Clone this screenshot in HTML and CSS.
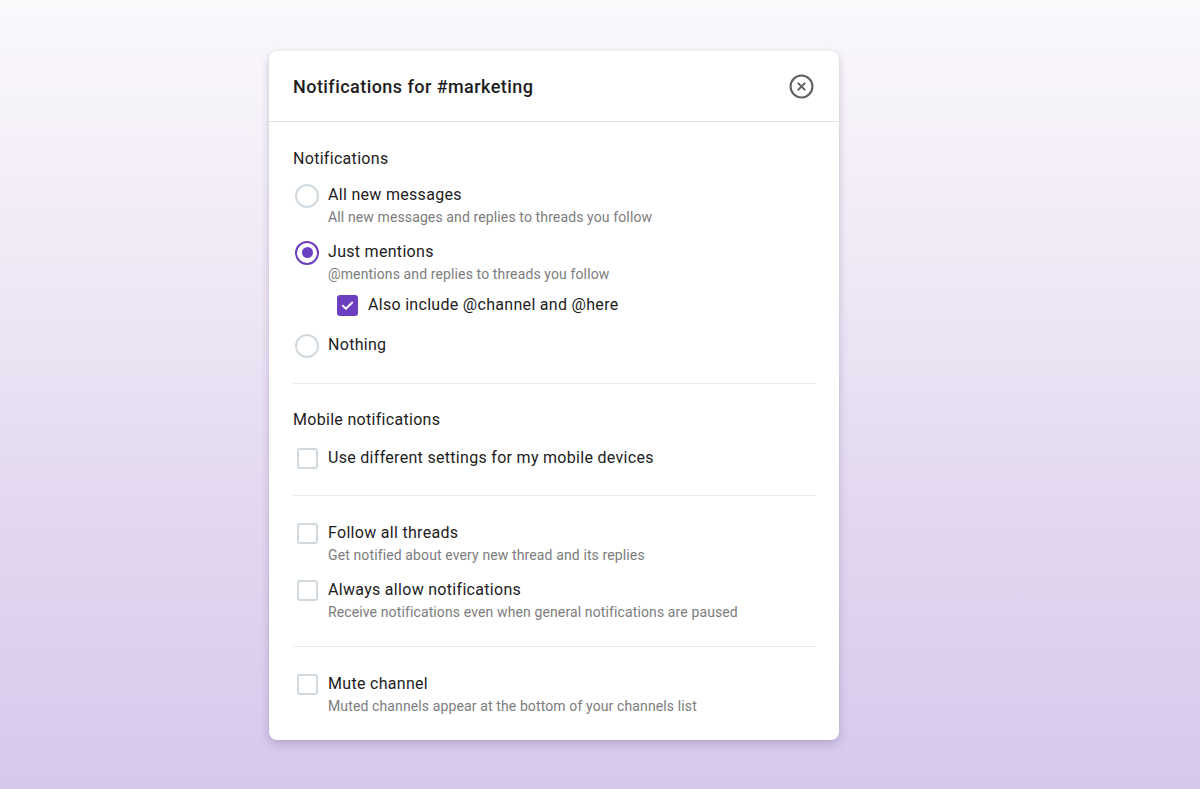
FILE: index.html
```html
<!DOCTYPE html>
<html lang="en">
<head>
<meta charset="utf-8">
<title>Notifications for #marketing</title>
<link rel="stylesheet" href="styles.css">
</head>
<body>
<div class="page">
  <div class="dialog">
    <div class="dialog-header">
      <h1 class="dialog-title">Notifications for #marketing</h1>
      <button class="close-btn" aria-label="Close">
        <svg width="25" height="25" viewBox="0 0 24 24" fill="none" stroke="#616061" stroke-width="2" stroke-linecap="round">
          <circle cx="12" cy="12" r="10.5"/>
          <path d="M9 9l6 6M15 9l-6 6"/>
        </svg>
      </button>
    </div>

    <div class="section section-first">
      <div class="section-label">Notifications</div>
      <div class="options">
        <div class="option">
          <span class="control"><span class="radio"></span></span>
          <div class="option-text">
            <div class="option-title">All new messages</div>
            <div class="option-desc">All new messages and replies to threads you follow</div>
          </div>
        </div>
        <div class="option">
          <span class="control"><span class="radio radio-on"></span></span>
          <div class="option-text">
            <div class="option-title">Just mentions</div>
            <div class="option-desc">@mentions and replies to threads you follow</div>
          </div>
        </div>
        <div class="option option-nested">
          <span class="control">
            <span class="checkbox checkbox-on">
              <svg width="15" height="15" viewBox="0 0 16 16" fill="none" stroke="#fff" stroke-width="2" stroke-linecap="round" stroke-linejoin="round"><path d="M3 8.3l3.3 3.2L13 4.8"/></svg>
            </span>
          </span>
          <div class="option-text">
            <div class="option-title">Also include @channel and @here</div>
          </div>
        </div>
        <div class="option">
          <span class="control"><span class="radio"></span></span>
          <div class="option-text">
            <div class="option-title">Nothing</div>
          </div>
        </div>
      </div>
    </div>

    <div class="divider"></div>

    <div class="section section-mobile">
      <div class="section-label">Mobile notifications</div>
      <div class="options">
        <div class="option option-single">
          <span class="control"><span class="checkbox"></span></span>
          <div class="option-text">
            <div class="option-title">Use different settings for my mobile devices</div>
          </div>
        </div>
      </div>
    </div>

    <div class="divider"></div>

    <div class="section">
      <div class="options">
        <div class="option">
          <span class="control"><span class="checkbox"></span></span>
          <div class="option-text">
            <div class="option-title">Follow all threads</div>
            <div class="option-desc">Get notified about every new thread and its replies</div>
          </div>
        </div>
        <div class="option">
          <span class="control"><span class="checkbox"></span></span>
          <div class="option-text">
            <div class="option-title">Always allow notifications</div>
            <div class="option-desc">Receive notifications even when general notifications are paused</div>
          </div>
        </div>
      </div>
    </div>

    <div class="divider"></div>

    <div class="section">
      <div class="options">
        <div class="option">
          <span class="control"><span class="checkbox"></span></span>
          <div class="option-text">
            <div class="option-title">Mute channel</div>
            <div class="option-desc">Muted channels appear at the bottom of your channels list</div>
          </div>
        </div>
      </div>
    </div>
  </div>
</div>
</body>
</html>
```

FILE: styles.css
```css
* { box-sizing: border-box; }

html, body {
  margin: 0;
  padding: 0;
  height: 100%;
}

body {
  font-family: Roboto, "Liberation Sans", Arial, sans-serif;
  color: #1d1c1d;
  background: linear-gradient(180deg, #fbf9fc 0%, #efe8f6 35%, #e3d8f0 65%, #d6c8ec 100%);
  overflow: hidden;
}

.page {
  display: flex;
  justify-content: center;
  padding-top: 51px;
  padding-right: 92px;
  height: 100%;
}

.dialog {
  width: 570px;
  height: 689px;
  background: #fff;
  border-radius: 8px;
  box-shadow: 0 4px 10px rgba(60, 40, 100, 0.22), 0 0 2px rgba(0, 0, 0, 0.08);
  overflow: hidden;
}

.dialog-header {
  height: 71px;
  padding: 0 24px;
  display: flex;
  align-items: center;
  justify-content: space-between;
  border-bottom: 1px solid #e2e2e4;
}

.dialog-title {
  margin: 0;
  font-size: 18px;
  font-weight: 500;
  color: #1d1c1d;
  letter-spacing: 0.45px;
  padding-top: 1px;
}

.close-btn {
  width: 28px;
  height: 28px;
  padding: 0;
  margin-right: 0;
  border: 0;
  background: transparent;
  display: flex;
  align-items: center;
  justify-content: center;
  cursor: pointer;
}

.section {
  padding: 26px 24px 23px;
}

.section-first {
  padding-top: 26px;
  padding-bottom: 27px;
}

.section-mobile {
  padding-top: 25px;
  padding-bottom: 24px;
}

.section-label {
  font-size: 16px;
  line-height: 22px;
  color: #1d1c1d;
  letter-spacing: 0.3px;
  margin-bottom: 14px;
}

.options {
  display: flex;
  flex-direction: column;
  gap: 13px;
}

.option {
  display: flex;
  align-items: flex-start;
  gap: 7px;
}

.option-nested {
  margin-left: 40px;
  margin-top: -4px;
  margin-bottom: 5px;
}

.option-single {
  padding: 2px 0;
}

.control {
  width: 28px;
  height: 22px;
  display: flex;
  align-items: center;
  justify-content: center;
  flex: none;
}

.radio {
  width: 24px;
  height: 24px;
  border-radius: 50%;
  border: 2px solid #d3dadf;
  display: flex;
  align-items: center;
  justify-content: center;
  margin-top: 1px;
}

.radio-on {
  border: 2.5px solid #6a3fc2;
}

.radio-on::after {
  content: "";
  width: 11px;
  height: 11px;
  border-radius: 50%;
  background: #6a3fc2;
}

.checkbox {
  width: 21px;
  height: 21px;
  border: 2px solid #d1d9de;
  border-radius: 3px;
  display: flex;
  align-items: center;
  justify-content: center;
}

.checkbox-on {
  background: #6b3fc0;
  border-color: #6b3fc0;
}

.option-text {
  display: flex;
  flex-direction: column;
}

.option-title {
  font-size: 16px;
  line-height: 22px;
  color: #1d1c1d;
  letter-spacing: 0.3px;
}

.option-desc {
  font-size: 14px;
  line-height: 22px;
  color: #7c7c7e;
  letter-spacing: 0.12px;
}

.divider {
  height: 1px;
  margin: 0 23px 0 24px;
  background: #ebebec;
}
```
